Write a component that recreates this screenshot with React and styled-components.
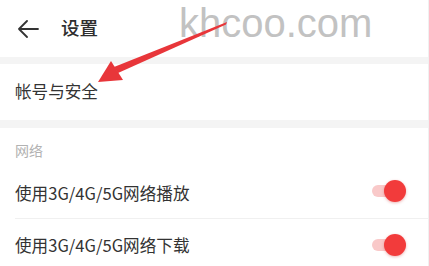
import React from "react";
import styled, { createGlobalStyle } from "styled-components";

const Global = createGlobalStyle`
  html, body { margin: 0; padding: 0; background: #fff; }
  body { font-family: "Noto Sans CJK SC", "Noto Sans", sans-serif; }
`;

const Page = styled.div`
  position: relative;
  width: 428px;
  height: 266px;
  border-right: 1px solid #f0f0f0;
  overflow: hidden;
  background: #fff;
`;

const Header = styled.div`
  height: 57px;
  display: flex;
  align-items: center;
  padding-left: 17px;
  gap: 22px;
`;

const Title = styled.div`
  font-size: 18.5px;
  font-weight: 500;
  color: #2e2e2e;
  line-height: 1;
  margin-top: -3px;
`;

const Band = styled.div`
  height: ${(p) => p.$h}px;
  background: #f4f4f4;
`;

const Row = styled.div`
  height: ${(p) => p.$h}px;
  display: flex;
  align-items: center;
  justify-content: space-between;
  margin-left: 15px;
  padding-right: 22px;
  border-bottom: ${(p) => (p.$divider ? "1px solid #f0f0f0" : "none")};
  box-sizing: border-box;
`;

const Label = styled.span`
  font-size: 16.6px;
  color: #333;
  line-height: 1;
  margin-top: ${(p) => p.$mt || 0}px;
`;

const SectionTitle = styled.div`
  height: 44px;
  display: flex;
  align-items: center;
  padding-left: 15px;
  font-size: 14px;
  color: #b2b2b2;
`;

const Toggle = styled.div`
  position: relative;
  width: 34px;
  height: 22px;
  display: flex;
  align-items: center;
  margin-top: ${(p) => p.$mt || 0}px;
`;

const Track = styled.div`
  width: 26px;
  height: 12px;
  border-radius: 6px;
  background: #f9c9c9;
`;

const Knob = styled.div`
  position: absolute;
  right: 0;
  top: 0;
  width: 22px;
  height: 22px;
  border-radius: 50%;
  background: #f23b3b;
  box-shadow: 0 1px 3px rgba(200, 40, 40, 0.35);
`;

const Watermark = styled.div`
  position: absolute;
  left: 179px;
  top: 0px;
  line-height: 1.15;
  font-family: "Liberation Sans", Arial, sans-serif;
  font-size: 40px;
  color: #c2c2c2;
  pointer-events: none;
`;

const Overlay = styled.svg`
  position: absolute;
  left: 0;
  top: 0;
  pointer-events: none;
`;

function BackArrow() {
  return (
    <svg width="22" height="18" viewBox="0 0 22 18">
      <path
        d="M21 9H2M10 1L2 9l8 8"
        fill="none"
        stroke="#333"
        strokeWidth="1.8"
        strokeLinecap="round"
        strokeLinejoin="round"
      />
    </svg>
  );
}

function Switch({ mt }) {
  return (
    <Toggle $mt={mt}>
      <Track />
      <Knob />
    </Toggle>
  );
}

export default function App() {
  return (
    <Page>
      <Global />
      <Header>
        <BackArrow />
        <Title>设置</Title>
      </Header>
      <Band $h={7} />
      <Row $h={56}>
        <Label $mt={-1}>帐号与安全</Label>
      </Row>
      <Band $h={8} />
      <SectionTitle>网络</SectionTitle>
      <Row $h={47} $divider>
        <Label $mt={-4}>使用3G/4G/5G网络播放</Label>
        <Switch mt={-8} />
      </Row>
      <Row $h={52}>
        <Label>使用3G/4G/5G网络下载</Label>
        <Switch />
      </Row>
      <Watermark>khcoo.com</Watermark>
      <Overlay width="429" height="266" viewBox="0 0 429 266">
        <path d="M227 22 L226 24.5 L118 73 L114 67 Z" fill="#e8363a" />
        <path d="M98 82 L111 61 L123 80 Z" fill="#e8363a" />
      </Overlay>
    </Page>
  );
}
